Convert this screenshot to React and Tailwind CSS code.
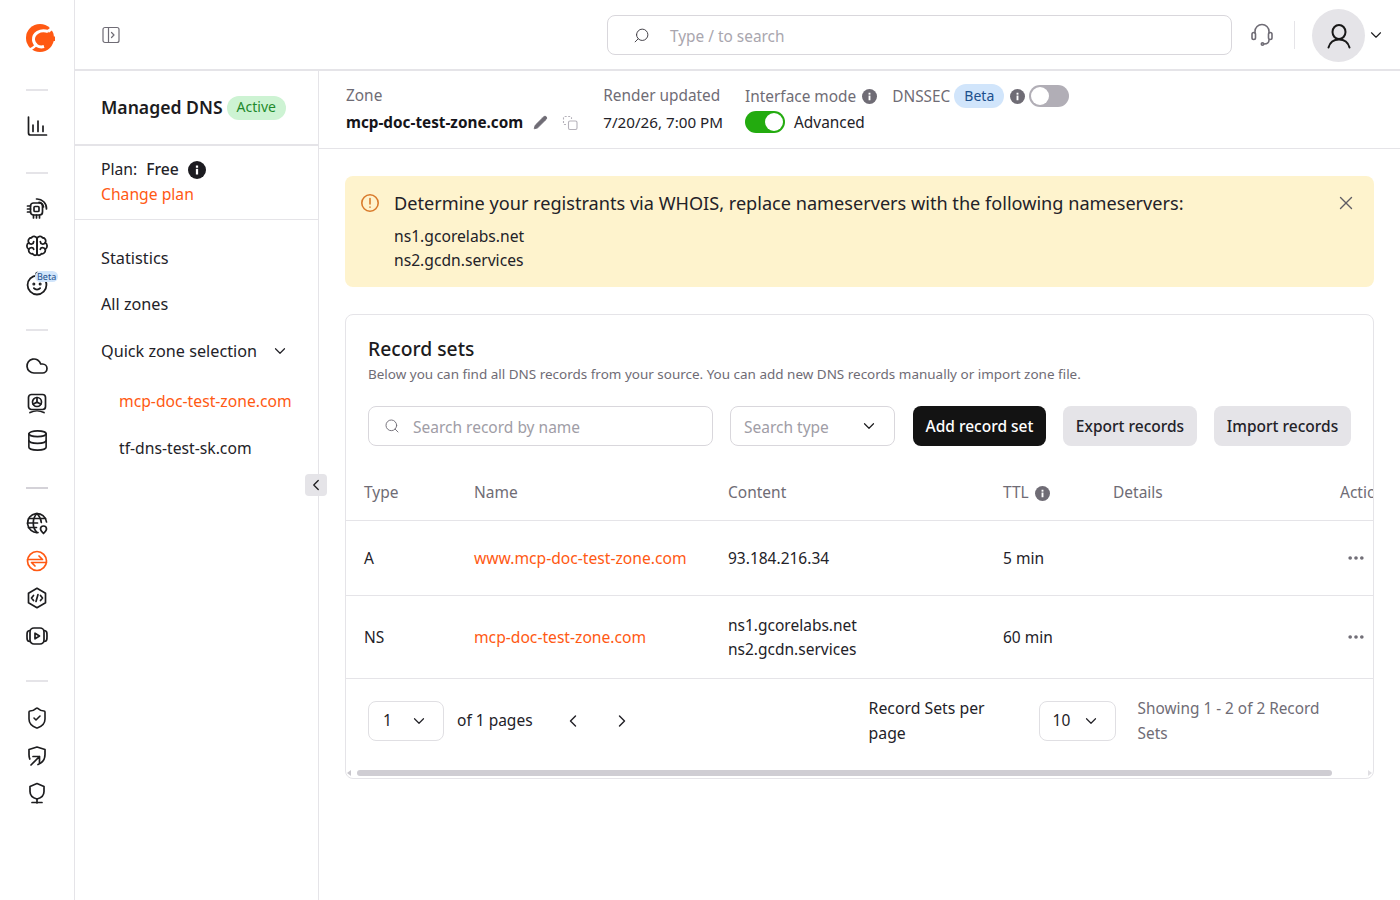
import React from "react";
import { ChevronDown, ChevronLeft, ChevronRight, Search, Pencil, X, Ellipsis, Cloud, Database, ShieldCheck } from "lucide-react";

const Ic = ({ children, c = "#1d1d1f", s = 24, sw = 1.7, className = "" }) => (
  <svg width={s} height={s} viewBox="0 0 24 24" fill="none" stroke={c} strokeWidth={sw} strokeLinecap="round" strokeLinejoin="round" className={className}>{children}</svg>
);

const Logo = () => (
  <svg width="30" height="30" viewBox="0 0 30 30">
    <circle cx="15" cy="15" r="14" fill="#ff5913" />
    <path d="M23 8.5C15 6 8 10.500 8.500 17C9 22 14 25 19 23.500" fill="none" stroke="#fff" strokeWidth="3" />
    <path d="M23 8.500L30 3" fill="none" stroke="#fff" strokeWidth="3" />
    <path d="M12 13.500H30V18H12Z" fill="#ff5913" />
    <path d="M1 27C5 27 8 25.500 10.500 22.500" fill="none" stroke="#fff" strokeWidth="2.500" />
  </svg>
);

const Chip = () => (
  <Ic><rect x="5.500" y="7" width="12" height="12" rx="3" /><rect x="9" y="10.500" width="5" height="5" rx="1" /><path d="M2.500 10h3M2.500 13h3M2.500 16h3M8.500 19v3M11.500 19v3M14.500 19v3M11.500 3a9.500 9.500 0 0 1 10 10M14 6.300a5.500 5.500 0 0 1 4.500 4.500" /></Ic>
);
const BrainIc = () => (
  <Ic className="scale-110" sw={1.6}><path d="M12 5C11 3 8 2.500 7 4.500C4.500 4.500 3.500 7 4.500 9C2.500 10 2 13.500 4.500 15C4 17.500 6 19.500 8 19C9 21 11.500 21 12 19Z" /><path d="M12 5C13 3 16 2.500 17 4.500C19.500 4.500 20.500 7 19.500 9C21.500 10 22 13.500 19.500 15C20 17.500 18 19.500 16 19C15 21 12.500 21 12 19Z" /><path d="M4.500 9C6 11 9 10.500 9 8M19.500 9C18 11 15 10.500 15 8M4.500 15C6 13 8.500 13 9 15M19.500 15C18 13 15.500 13 15 15" /></Ic>
);
const Baby = () => (
  <Ic className="scale-105"><path d="M12 4a9 9 0 1 0 9 9 9 9 0 0 0-4-7.500" /><path d="M12 4c-1.500-1-1-2.500.5-3" /><circle cx="9" cy="12" r=".6" /><circle cx="15" cy="12" r=".6" /><path d="M9 16a4 4 0 0 0 6 0" /></Ic>
);
const Screen = () => (
  <Ic><rect x="3.500" y="3.500" width="17" height="15" rx="3" /><circle cx="12" cy="11" r="4.500" /><path d="M12 11V6.500M12 11l-3.800 2.300M12 11l3.800 2.300M5 21.500c4-2 10-2 14 0" /></Ic>
);
const GlobePin = () => (
  <Ic><path d="M13 21.500A9.500 9.500 0 1 1 21.500 11" /><path d="M2.500 12h10M3.500 7.500h17M3.500 16.500h8M12 2.500c-5 5-5 14 0 19M12 2.500c3 3 4 6 4.300 9" /><path d="M18.500 22.500c-1.500-1.500-3-3-3-4.500a3 3 0 0 1 6 0c0 1.500-1.500 3-3 4.500Z" /></Ic>
);
const Transfer = () => (
  <Ic c="#ff5913"><circle cx="12" cy="12" r="9.500" /><path d="M2.500 10.500h15l-3.500-3.500M21.500 13.500h-15l3.500 3.500" /></Ic>
);
const HexCode = () => (
  <Ic><path d="M12 2.300l8.500 4.900v9.600L12 21.700l-8.500-4.900V7.200Z" /><path d="M8.500 9.500L6.500 12l2 2.500M15.500 9.500l2 2.500-2 2.500M13 8.500l-2 7" /></Ic>
);
const Video = () => (
  <Ic><rect x="5" y="4" width="14" height="16" rx="4" /><path d="M4.500 6.500C2 7 2 8.500 2 12s0 5 2.500 5.500M19.500 6.500C22 7 22 8.500 22 12s0 5-2.500 5.500" /><path d="M10 9.200v5.600l4.500-2.800Z" /></Ic>
);
const ShieldArrow = () => (
  <Ic><path d="M4.800 15C4 13.500 4 12 4 10.500V5.500L12 3l8 2.500v5c0 5-3 8.500-7 10" /><path d="M6 21l8.500-8.500M8 12.500h6.500V19" /></Ic>
);
const Pin = () => (
  <Ic><path d="M12 2.500l7 3v5c0 4-3 6.500-7 7.500-4-1-7-3.500-7-7.500v-5Z" /><path d="M12 18v4M7 21.500h10" /></Ic>
);
const Headset = () => (
  <svg width="24" height="26" viewBox="0 0 24 26" fill="none" stroke="#6f6c75" strokeWidth="1.600" strokeLinecap="round">
    <path d="M5 11V9.500a7 7 0 0 1 14 0V11" /><rect x="2" y="10.500" width="3.500" height="7" rx="1.700" /><rect x="18.500" y="10.500" width="3.500" height="7" rx="1.700" /><path d="M19 18c0 2.500-2 4-5 4" /><circle cx="12.500" cy="22" r="1.200" />
  </svg>
);
const PanelIcon = () => (
  <svg width="18" height="18" viewBox="0 0 18 18" fill="none" stroke="#6f6c75" strokeWidth="1.200" strokeLinecap="round" strokeLinejoin="round">
    <rect x="1" y="1.500" width="16" height="15" rx="2" /><path d="M6.500 1.500v15M9.500 6.500L12 9l-2.500 2.500" />
  </svg>
);
const UserIc = () => (
  <svg width="28" height="28" viewBox="0 0 28 28" fill="none" stroke="#181818" strokeWidth="2" strokeLinecap="round">
    <ellipse cx="14" cy="10" rx="6.500" ry="7" /><path d="M3.500 25.500C5 20 9 17.500 14 17.500S23 20 24.500 25.500" />
  </svg>
);
const Copy = () => (
  <svg width="16" height="16" viewBox="0 0 16 16" fill="none" stroke="#b5b2ba" strokeWidth="1.100">
    <rect x="6.500" y="6" width="8.500" height="8.500" rx="1.500" /><path d="M4 9.500H2.500a1 1 0 0 1-1-1v-6a1 1 0 0 1 1-1h6a1 1 0 0 1 1 1V4" strokeDasharray="2 1.500" />
  </svg>
);
const InfoDot = ({ s = 15 }) => (
  <svg width={s} height={s} viewBox="0 0 16 16" className="shrink-0">
    <circle cx="8" cy="8" r="8" fill="#6f6c75" /><rect x="7" y="7" width="2" height="5" fill="#fff" /><rect x="7" y="4" width="2" height="2" fill="#fff" />
  </svg>
);

const Divider = ({ className = "" }) => <div className={`w-[22px] h-0.5 bg-[#e5e4e8] ${className}`} />;
const Rail = ({ children }) => <div className="h-[37.5px] flex items-center justify-center relative">{children}</div>;

function Sidebar() {
  return (
    <aside className="w-[75px] shrink-0 border-r border-[#e5e4e8] flex flex-col items-center">
      <div className="h-[76px] flex items-center justify-center pl-[6px]"><Logo /></div>
      <Divider className="mt-[13px]" />
      <div className="mt-4"><Rail><Ic><path d="M3.500 3v16a2 2 0 0 0 2 2h16" /><path d="M8 11v6.500M13 7v10.500M18 12v5.500" /></Ic></Rail></div>
      <Divider className="mt-[27px]" />
      <div className="mt-[16px]">
        <Rail><Chip /></Rail>
        <Rail><BrainIc /></Rail>
        <Rail>
          <span className="mt-[2px]"><Baby /></span>
          <span className="absolute left-[10px] top-[6px] bg-[#d1e5fb] text-[#1c4f8c] text-[9px] leading-[11px] px-[2px] rounded-full">Beta</span>
        </Rail>
      </div>
      <Divider className="mt-[27px]" />
      <div className="mt-[16px]">
        <Rail><Cloud size={24} strokeWidth={1.7} color="#1d1d1f" /></Rail>
        <Rail><Screen /></Rail>
        <Rail><Database size={23} strokeWidth={1.7} color="#1d1d1f" /></Rail>
      </div>
      <Divider className="mt-[27px] !bg-[#d4d2d8]" />
      <div className="mt-4">
        <Rail><GlobePin /></Rail>
        <Rail><Transfer /></Rail>
        <Rail><HexCode /></Rail>
        <Rail><Video /></Rail>
      </div>
      <Divider className="mt-[25px]" />
      <div className="mt-[18px]">
        <Rail><ShieldCheck size={24} strokeWidth={1.6} color="#1d1d1f" /></Rail>
        <Rail><ShieldArrow /></Rail>
        <Rail><Pin /></Rail>
      </div>
    </aside>
  );
}

function Header() {
  return (
    <header className="h-[71px] shrink-0 border-b-2 border-[#e5e4e8] flex items-center">
      <div className="ml-[27px]"><PanelIcon /></div>
      <div className="ml-[487px] w-[625px] h-10 mt-px rounded-lg border border-[#d9d7dc] flex items-center text-[#a9a6ae] text-[15.4px]">
        <Search size={17} strokeWidth={1.4} color="#45434a" className="ml-[25px] -scale-x-100" />
        <span className="ml-[20px] pt-[3px]">Type / to search</span>
      </div>
      <div className="ml-[18px]"><Headset /></div>
      <div className="ml-[20px] w-px h-[28px] bg-[#e5e4e8]" />
      <div className="ml-[17px] mt-[2px] w-[53px] h-[53px] rounded-full bg-[#e5e4e8] flex items-center justify-center">
        <UserIc />
      </div>
      <ChevronDown size={18} strokeWidth={1.5} color="#1d1d1f" className="ml-[2px]" />
    </header>
  );
}

function Nav() {
  return (
    <nav className="w-[244px] shrink-0 border-r border-[#e5e4e8] relative text-[15.7px] text-[#232228]">
      <div className="h-[75px] border-b-2 border-[#e5e4e8] flex items-center pl-[26px] gap-1">
        <span className="text-[17.6px] font-semibold text-[#1c1b20]">Managed DNS</span>
        <span className="h-6 px-2.5 pb-[3px] rounded-full bg-[#cdf3d3] text-[#1f8a2c] text-[14px] flex items-center">Active</span>
      </div>
      <div className="h-[74px] border-b border-[#e5e4e8] pl-[26px] pt-[12px]">
        <div className="flex items-center h-6">
          <span>Plan:</span><span className="ml-[9px] font-medium">Free</span>
          <svg width="18" height="18" viewBox="0 0 16 16" className="ml-[9px]"><circle cx="8" cy="8" r="8" fill="#1c1b20" /><rect x="7" y="7" width="2" height="5" fill="#fff" /><rect x="7" y="4" width="2" height="2" fill="#fff" /></svg>
        </div>
        <div className="text-[#ff5913] h-[25px] leading-[24px]">Change plan</div>
      </div>
      <div className="pl-[26px] pt-[26px]">
        <div className="h-6 leading-6 text-[16.3px]">Statistics</div>
        <div className="h-6 leading-6 mt-[22px] text-[16.2px]">All zones</div>
        <div className="h-6 leading-6 mt-[23px] flex items-center text-[16.2px]">Quick zone selection<ChevronDown size={18} strokeWidth={1.6} className="ml-[14px]" /></div>
        <div className="h-6 leading-6 mt-[26px] ml-[18px] text-[#ff5913]">mcp-doc-test-zone.com</div>
        <div className="h-6 leading-6 mt-[23px] ml-[18px]">tf-dns-test-sk.com</div>
      </div>
      <button className="absolute left-[230px] top-[403px] w-[22px] h-[22px] rounded bg-[#e5e4e8] flex items-center justify-center">
        <ChevronLeft size={18} strokeWidth={1.7} color="#1d1d1f" />
      </button>
    </nav>
  );
}

function ZoneBar() {
  return (
    <div className="h-[78px] shrink-0 border-b border-[#e5e4e8] pl-[27px] pt-[13px] flex text-[15.4px]">
      <div>
        <div className="h-6 leading-6 text-[#6f6c75]">Zone</div>
        <div className="h-6 mt-[2px] flex items-center">
          <span className="font-bold text-[#16151a] text-[15.3px]">mcp-doc-test-zone.com</span>
          <Pencil size={15} fill="#6f6c75" color="#6f6c75" strokeWidth={1.4} className="ml-[10px]" />
          <span className="ml-[14px] mt-[1px]"><Copy /></span>
        </div>
      </div>
      <div className="ml-[25px]">
        <div className="h-6 leading-6 text-[#6f6c75]">Render updated</div>
        <div className="h-6 leading-6 mt-[2px] text-[#232228] text-[15.2px]">7/20/26, 7:00 PM</div>
      </div>
      <div className="ml-[22px]">
        <div className="h-6 flex items-center text-[#6f6c75] mt-px -translate-y-px">
          <span className="translate-y-px">Interface mode</span><span className="ml-[6px]"><InfoDot /></span>
          <span className="ml-[15px] translate-y-px">DNSSEC</span>
          <span className="ml-1 h-6 px-[10px] pb-px rounded-full bg-[#d1e5fb] text-[#1c4f8c] text-[14px] flex items-center">Beta</span>
          <span className="ml-[6px]"><InfoDot /></span>
          <span className="ml-1 w-10 h-[22px] rounded-full bg-[#b1aeb6] flex items-center pl-[2px]"><span className="w-[18px] h-[18px] rounded-full bg-white" /></span>
        </div>
        <div className="h-6 mt-[1px] flex items-center text-[#232228]">
          <span className="w-10 h-[22px] rounded-full bg-[#23ab0f] flex items-center justify-end pr-[2px]"><span className="w-[18px] h-[18px] rounded-full bg-white" /></span>
          <span className="ml-[9px] pt-[2px]">Advanced</span>
        </div>
      </div>
    </div>
  );
}

function Alert() {
  return (
    <div className="mt-[27px] ml-[26px] w-[1029px] h-[111px] rounded-lg bg-[#fef3cd] flex text-[#232228] relative">
      <svg width="20" height="20" viewBox="0 0 20 20" fill="none" stroke="#d97b2c" strokeWidth="1.600" strokeLinecap="round" className="ml-[15px] mt-[17px] shrink-0">
        <circle cx="10" cy="10" r="8.200" /><path d="M10 5.500v5.500M10 14v.2" />
      </svg>
      <div className="ml-[14px] pt-[13px]">
        <div className="text-[18.14px] leading-[28px]">Determine your registrants via WHOIS, replace nameservers with the following nameservers:</div>
        <div className="text-[15.65px] leading-6 mt-[7px]">ns1.gcorelabs.net</div>
        <div className="text-[15.65px] leading-6">ns2.gcdn.services</div>
      </div>
      <X size={22} strokeWidth={1.5} color="#5f5d64" className="absolute right-[17px] top-[16px]" />
    </div>
  );
}

const cols = "grid grid-cols-[110px_254px_275px_110px_227px_100px] pl-[18px] w-[1100px] items-center";

function RecordSets() {
  return (
    <div className="mt-[27px] ml-[26px] w-[1029px] h-[465px] rounded-lg border border-[#e5e4e8] overflow-hidden relative text-[15.5px] text-[#232228]">
      <div className="pl-[22px] pt-[20px]">
        <div className="text-[19.3px] leading-7 font-medium text-[#1c1b20]">Record sets</div>
        <div className="text-[13.47px] leading-[20px] mt-[1px] text-[#6f6c75]">Below you can find all DNS records from your source. You can add new DNS records manually or import zone file.</div>
        <div className="flex mt-[22px] h-10 items-center">
          <div className="w-[345px] h-10 rounded-lg border border-[#d9d7dc] flex items-center text-[#a09da6]">
            <Search size={16} strokeWidth={1.4} color="#6f6c75" className="ml-[15px]" />
            <span className="ml-[13px] pt-[3px]">Search record by name</span>
          </div>
          <div className="ml-[17px] w-[165px] h-10 rounded-lg border border-[#d9d7dc] flex items-center text-[#a09da6] pl-[13px]">
            <span className="pt-[3px]">Search type</span>
            <ChevronDown size={18} strokeWidth={1.6} color="#1d1d1f" className="ml-auto mr-4" />
          </div>
          <button className="ml-[18px] w-[133px] h-10 pt-[2px] rounded-lg bg-[#131313] text-white font-medium">Add record set</button>
          <button className="ml-[17px] w-[134px] h-10 pt-[2px] rounded-lg bg-[#e5e4e8] font-medium text-[#232228]">Export records</button>
          <button className="ml-[17px] w-[137px] h-10 pt-[2px] rounded-lg bg-[#e5e4e8] font-medium text-[#232228]">Import records</button>
        </div>
      </div>
      <div className={`${cols} h-[75px] pt-5 border-b border-[#e5e4e8] text-[#6f6c75]`}>
        <span>Type</span><span>Name</span><span>Content</span>
        <span className="flex items-center gap-[6px]">TTL <InfoDot /></span>
        <span>Details</span><span>Actions</span>
      </div>
      <div className="w-[1027px] overflow-hidden">
        <div className={`${cols} h-[75px] pt-[2px] border-b border-[#e5e4e8]`}>
          <span>A</span><span className="text-[#ff5913] text-[15.65px]">www.mcp-doc-test-zone.com</span><span>93.184.216.34</span><span>5 min</span><span />
          <Ellipsis size={20} color="#6f6c75" strokeWidth={2.4} className="ml-[6px] -mt-[2px]" />
        </div>
        <div className={`${cols} h-[83px] pt-[2px] border-b border-[#e5e4e8]`}>
          <span>NS</span><span className="text-[#ff5913] text-[15.65px]">mcp-doc-test-zone.com</span>
          <div className="leading-6 -mt-[2px]"><div>ns1.gcorelabs.net</div><div>ns2.gcdn.services</div></div>
          <span>60 min</span><span />
          <Ellipsis size={20} color="#6f6c75" strokeWidth={2.4} className="ml-[6px] -mt-[2px]" />
        </div>
      </div>
      <div className="flex items-center h-[84px] pl-[22px]">
        <div className="w-[76px] h-10 rounded-lg border border-[#e0dfe3] flex items-center pl-[14px]">
          <span>1</span><ChevronDown size={18} strokeWidth={1.6} className="ml-auto mr-[15px]" />
        </div>
        <span className="ml-[13px]">of 1 pages</span>
        <ChevronLeft size={20} strokeWidth={1.7} className="ml-[30px]" />
        <ChevronRight size={20} strokeWidth={1.7} className="ml-[29px]" />
        <div className="ml-[237px] w-[130px] leading-[25px] text-[15.8px]">Record Sets per page</div>
        <div className="ml-[40px] w-[77px] h-10 rounded-lg border border-[#e0dfe3] flex items-center pl-[13px]">
          <span>10</span><ChevronDown size={18} strokeWidth={1.6} className="ml-auto mr-[15px]" />
        </div>
        <div className="ml-[22px] w-[200px] leading-[25px] text-[#6f6c75] text-[15.35px]">Showing 1 - 2 of 2 Record Sets</div>
      </div>
      <div className="absolute left-0 right-0 bottom-0 h-[10px] flex items-center">
        <span className="ml-[1px] w-0 h-0 border-y-[3.5px] border-y-transparent border-r-[4px] border-r-[#c9c7cd]" />
        <span className="ml-[6px] w-[975px] h-[6px] rounded-full bg-[#cfcdd3]" />
        <span className="ml-auto mr-[1px] w-0 h-0 border-y-[3.5px] border-y-transparent border-l-[4px] border-l-[#e0dfe3]" />
      </div>
    </div>
  );
}

export default function App() {
  return (
    <div className="w-[1400px] h-[900px] overflow-hidden flex bg-white font-['Noto_Sans',sans-serif]">
      <Sidebar />
      <div className="flex-1 flex flex-col min-w-0">
        <Header />
        <div className="flex-1 flex min-h-0">
          <Nav />
          <main className="flex-1 min-w-0">
            <ZoneBar />
            <Alert />
            <RecordSets />
          </main>
        </div>
      </div>
    </div>
  );
}
